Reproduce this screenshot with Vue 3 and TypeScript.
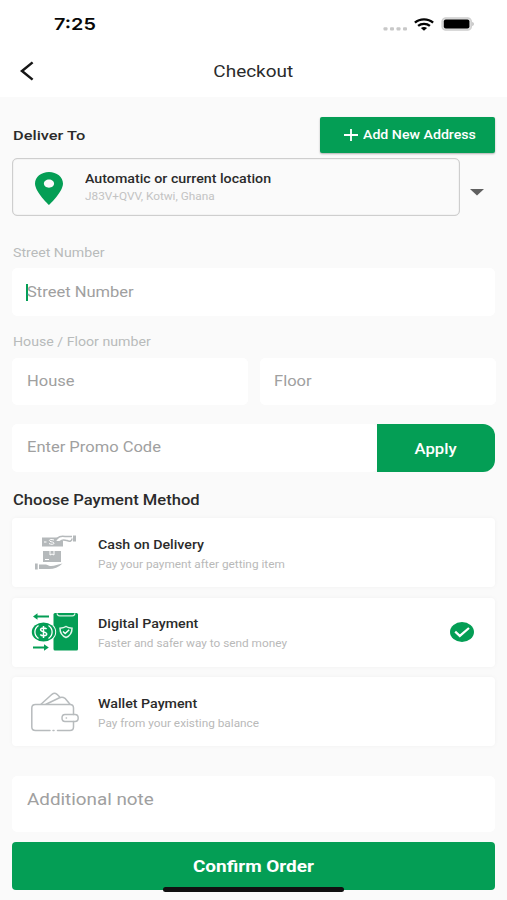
<script setup lang="ts">
import { ref } from 'vue'

type MethodId = 'cash' | 'digital' | 'wallet'

interface PaymentMethod {
  id: MethodId
  title: string
  subtitle: string
}

const methods: PaymentMethod[] = [
  { id: 'cash', title: 'Cash on Delivery', subtitle: 'Pay your payment after getting item' },
  { id: 'digital', title: 'Digital Payment', subtitle: 'Faster and safer way to send money' },
  { id: 'wallet', title: 'Wallet Payment', subtitle: 'Pay from your existing balance' },
]

const selected = ref<MethodId>('digital')
</script>

<template>
  <div class="screen">
    <header class="top">
      <div class="status">
        <span class="wide time">7:25</span>
        <div class="indicators">
          <svg class="dots" viewBox="0 0 24 4"><g fill="#c8c8c8"><rect x="0.500" y="0.300" width="4" height="3.200" rx="1" /><rect x="7" y="0.300" width="4" height="3.200" rx="1" /><rect x="13.500" y="0.300" width="4" height="3.200" rx="1" /><rect x="20" y="0.300" width="4" height="3.200" rx="1" /></g></svg>
          <svg class="wifi" viewBox="0 0 20 13">
            <g fill="none" stroke="#050505" stroke-width="2.300"><path d="M.9 4.700C5.800.2 14.200.2 19.100 4.700" /><path d="M4.100 7.900c3.200-2.800 8.600-2.800 11.800 0" /></g>
            <path d="M6.900 10.100c1.700-1.400 4.500-1.400 6.200 0L10 12.700z" fill="#050505" />
          </svg>
          <svg class="battery" viewBox="0 0 34 14"><rect x="1" y=".8" width="29.400" height="12.400" rx="3.800" fill="#ddd" stroke="#cfcfcf" stroke-width="1.200" /><rect x="2.800" y="2.400" width="25.600" height="9.200" rx="2" fill="#000" /><path d="M31.300 4.800c2 .8 2 3.600 0 4.400z" fill="#b5b5b5" /></svg>
        </div>
      </div>
      <div class="appbar">
        <button class="back" aria-label="Back"><svg viewBox="0 0 14 20"><path d="M12.600 1.400 2 10l10.600 8.600" fill="none" stroke="#161616" stroke-width="2.500" /></svg></button>
        <h1 class="wide title">Checkout</h1>
      </div>
    </header>

    <main>
      <div class="deliver">
        <h2 class="wide heading deliver-title">Deliver To</h2>
        <button class="add">
          <svg viewBox="0 0 14 12"><path d="M0 6h14M7 0v12" stroke="#fff" stroke-width="1.800" /></svg>
          <span class="wide add-text">Add New Address</span>
        </button>
      </div>

      <div class="location-row">
        <div class="location">
          <svg class="pin" viewBox="0 0 28 33"><path fill="#049e55" fill-rule="evenodd" d="M14 0C6.200 0 0 5 0 11.500 0 20 14 33 14 33s14-13 14-21.500C28 5 21.800 0 14 0Zm0 7.400c2.900 0 5.100 1.900 5.100 4.200s-2.200 4.200-5.100 4.200-5.100-1.900-5.100-4.200 2.200-4.200 5.100-4.200Z" /></svg>
          <div class="copy">
            <span class="wide loc-title">Automatic or current location</span>
            <span class="wide loc-sub">J83V+QVV, Kotwi, Ghana</span>
          </div>
        </div>
        <svg class="caret" viewBox="0 0 14 7"><path d="M0 0h14L7 6.500z" fill="#606060" /></svg>
      </div>

      <label class="label"><span class="wide">Street Number</span></label>
      <div class="field street"><i class="cursor"></i><span class="wide hint">Street Number</span></div>
      <label class="label second"><span class="wide">House / Floor number</span></label>
      <div class="pair">
        <div class="field"><span class="wide hint">House</span></div>
        <div class="field floor"><span class="wide hint">Floor</span></div>
      </div>
      <div class="promo">
        <div class="field promo-field"><span class="wide hint">Enter Promo Code</span></div>
        <button class="apply"><span class="wide center">Apply</span></button>
      </div>

      <h2 class="wide heading choose">Choose Payment Method</h2>
      <div class="methods">
        <div v-for="m in methods" :key="m.id" class="card" @click="selected = m.id">
          <svg v-if="m.id === 'cash'" class="icon" viewBox="0 0 50 42">
            <g fill="#b5b9bb">
              <path d="M11 5.500h17l-3 3.500h7v5.500H11z" />
              <path d="M42 3.500h3v6h-3z" /><path d="M12 19h18v11H12z" />
              <path d="M4 31.500h2.700v6H4zM8 32.500h6c3 0 3 1.500 6 1.500 4 0 7-1.600 11.500-2.500-4 3.800-8.500 5.500-13.500 5.500H8z" />
            </g>
            <path d="M24 9c3-5 6-5 10-4.600h7M29 9.500c3-3 5-1 7-1 3 1.500 5 .5 5-2" fill="none" stroke="#b5b9bb" stroke-width="1.500" />
            <path d="M23 8c-4-1.300-5.500.2-4 1.300 1 .8 4 .5 4 1.900 0 1.500-3 1.300-5 .4M13 10h2.500M19 19v4l2-1 2 1v-4M14 27.500h4" fill="none" stroke="#fff" stroke-width="1" />
          </svg>
          <svg v-else-if="m.id === 'digital'" class="icon" viewBox="0 0 50 42">
            <rect x="22.500" y="2" width="24.500" height="37.500" rx="1.500" fill="#049e55" />
            <path d="M26 2.400c.5 2.300 1 2.500 2.500 2.500h13c1.500 0 2-.2 2.500-2.500" fill="none" stroke="#d7f0e3" stroke-width="1.200" />
            <ellipse cx="12.800" cy="21" rx="12.400" ry="10.300" fill="#fff" /><ellipse cx="12.500" cy="21" rx="11.700" ry="9.500" fill="#049e55" />
            <path d="M7.500 14.500q-3.600 2.500-3.600 6.500t3.600 6.500M17.500 14.500q3.600 2.500 3.600 6.500t-3.600 6.500" fill="none" stroke="#fff" stroke-width="1.300" />
            <path d="M15.600 18.200c-1-1.500-6-1.700-6 .6 0 2.500 6.100 1.600 6.100 4.200 0 2.400-5 2.300-6.400.6M12.500 15v12" fill="none" stroke="#fff" stroke-width="1.500" />
            <path d="M35 15.500c-1.500 1-3.500 1.600-6 1.700 0 5 1.500 7.400 6 9.300 4.500-1.900 6-4.300 6-9.300-2.500-.1-4.500-.7-6-1.700Z" fill="none" stroke="#e2f5eb" stroke-width="1.500" />
            <path d="m32 20.500 2.200 2 4-3.700" fill="none" stroke="#fff" stroke-width="1.500" />
            <path d="M5.500 5.500H18M2 36.500h13" stroke="#049e55" stroke-width="2" /><path d="M6.500 2.300v6.400L2 5.500zM13 33.300v6.400l4.800-3.200z" fill="#049e55" />
          </svg>
          <svg v-else class="icon" viewBox="0 0 50 42">
            <g fill="none" stroke="#b7bbbd" stroke-width="1.500" stroke-linecap="round" stroke-linejoin="round">
              <path d="M19 39.500H4.500Q.8 39.500.8 36V17q0-3.500 3.700-3.500H39q3.500 0 3.500 3.500v6.500M42.500 30.500V36q0 3.500-3.500 3.500H26.500M22 39.500h1" />
              <path d="m10 13.300 11-10q2.500-1.900 5 0l2.500 2.500M15 13.300l13.500-6.500q2.800-1.300 5.500.5l5 6" />
              <path d="M34 23.500h10q3.200 0 3.200 3.500T44 30.500H34q-3 0-3-3.500t3-3.500ZM35.200 27h.3" />
            </g>
          </svg>
          <div class="copy method-copy">
            <span class="wide m-title">{{ m.title }}</span>
            <span class="wide m-sub">{{ m.subtitle }}</span>
          </div>
          <svg v-if="selected === m.id" class="check" viewBox="0 0 24 20"><ellipse cx="12" cy="10" rx="12" ry="10" fill="#049e55" /><path d="m5.200 9.600 4.600 4.300L19 6" fill="none" stroke="#fff" stroke-width="2.200" /></svg>
        </div>
      </div>

      <div class="field note"><span class="wide hint note-hint">Additional note</span></div>
      <button class="confirm"><span class="wide center">Confirm Order</span><i class="home"></i></button>
    </main>
  </div>
</template>

<style>
body { margin: 0; background: #fafafa; }
</style>

<style scoped>
* { box-sizing: border-box; }
.screen { width: 507px; height: 900px; overflow: hidden; background: #fafafa; font-family: Roboto, "Liberation Sans", sans-serif; color: #2b2b2b; }
button { border: 0; padding: 0; font-family: inherit; cursor: pointer; }
h1, h2 { margin: 0; }
svg { display: block; flex: none; }
/* Labels use horizontally expanded letterforms. */
.wide { display: block; width: max-content; white-space: nowrap; transform: scaleX(1.2); transform-origin: left center; }
.wide.center { transform-origin: center; }
.top { height: 97px; background: #fff; }
.status { height: 48px; display: flex; justify-content: space-between; padding: 0 32px 0 54px; }
.time { font: 600 16.500px/20px Inter, sans-serif; color: #080808; margin-top: 14px; }
.indicators { display: flex; align-items: center; gap: 7px; height: 48px; }
.dots { width: 24px; height: 4px; margin-top: 9px; }
.wifi { width: 20px; height: 13px; }
.battery { width: 34px; height: 14px; }
.appbar { height: 46px; display: grid; grid-template-columns: 60px 1fr 60px; align-items: center; }
.back { background: none; padding-left: 20px; }
.back svg { width: 14px; height: 20px; }
.title { font-size: 15.800px; line-height: 20px; font-weight: 400; justify-self: center; transform-origin: center; padding-top: 1px; }
main { padding: 20px 12px 0; }
.heading { font-weight: 500; font-size: 13.650px; line-height: 20px; }
.deliver { display: flex; height: 36px; align-items: center; justify-content: space-between; }
.deliver-title { margin-left: 1px; }
.add { width: 175px; height: 36px; background: #049e55; border-radius: 2px; box-shadow: 0 1px 2px rgb(0 0 0 / 30%); display: flex; align-items: center; gap: 5px; padding-left: 24px; }
.add svg { width: 14px; height: 12px; }
.add-text { color: #fff; font-size: 12px; font-weight: 500; transform: scaleX(1.18); }
.location-row { margin-top: 5px; display: flex; align-items: center; gap: 10px; }
.location { width: 448px; height: 58px; border: 1px solid #cecece; box-shadow: inset 0 0 1px #b8b8b8; border-radius: 5px; display: flex; align-items: center; padding-left: 22px; }
.pin { width: 28px; height: 33px; margin-top: 2px; }
.copy { display: flex; flex-direction: column; }
.location .copy { margin-left: 22px; gap: 2px; }
.loc-title { font-weight: 500; font-size: 12px; line-height: 16px; transform: scaleX(1.185); }
.loc-sub { font-size: 10px; line-height: 15px; color: #c3c3c3; transform: scaleX(1.18); }
.caret { width: 14px; height: 7px; margin-top: 11px; }
.label { display: flex; align-items: flex-start; height: 52px; padding: 21px 0 0 1px; font-size: 12px; line-height: 32px; color: #b8bbbb; }
.label .wide { transform: scaleX(1.18); }
.second { height: 42px; padding-top: 10px; }
.field { height: 47px; background: #fff; border-radius: 5px; display: flex; align-items: center; padding: 0 0 2px 15px; position: relative; box-shadow: 0 0 2px rgb(0 0 0 / 1%); }
.street { height: 48px; padding-bottom: 0; }
.floor { padding-left: 14px; }
.cursor { position: absolute; left: 14px; top: 16px; width: 2px; height: 17px; background: #049e55; }
.hint { font-size: 14px; line-height: 18px; color: #a0a0a0; transform: scaleX(1.18); }
.pair { display: grid; grid-template-columns: 236px 236px; gap: 12px; }
.promo { display: flex; width: 483px; margin-top: 19px; }
.promo-field { flex: 1; height: 48px; }
.apply { width: 118px; height: 48px; background: #049e55; border-radius: 0 12px 12px 0; display: flex; align-items: center; justify-content: center; padding-top: 2px; color: #fff; font-weight: 500; font-size: 13.900px; }
.choose { margin: 18px 0 8px 1px; font-size: 13.800px; }
.methods { display: grid; gap: 10.500px; }
.card { width: 483px; height: 69px; background: #fff; border-radius: 4px; box-shadow: 0 0 4px rgb(0 0 0 / 4%); display: flex; align-items: center; padding: 0 21px 0 19px; }
.icon { width: 50px; height: 42px; }
.method-copy { margin: 4px auto 0 17px; gap: 4px; }
.m-title { font-weight: 500; font-size: 12px; line-height: 16px; transform: scaleX(1.185); }
.m-sub { font-size: 10px; line-height: 16px; color: #b9b9b9; transform: scaleX(1.18); }
.check { width: 24px; height: 20px; }
.note { width: 483px; height: 56px; margin-top: 30px; padding-bottom: 9px; }
.note-hint { font-size: 15.700px; transform: scaleX(1.2); }
.confirm { position: relative; width: 483px; height: 48px; margin-top: 10px; background: #049e55; border-radius: 4px; display: flex; align-items: center; justify-content: center; color: #fff; font-weight: 700; font-size: 15.800px; }
.home { position: absolute; left: 151px; top: 45px; width: 181px; height: 5px; border-radius: 3px; background: #111; }
</style>
